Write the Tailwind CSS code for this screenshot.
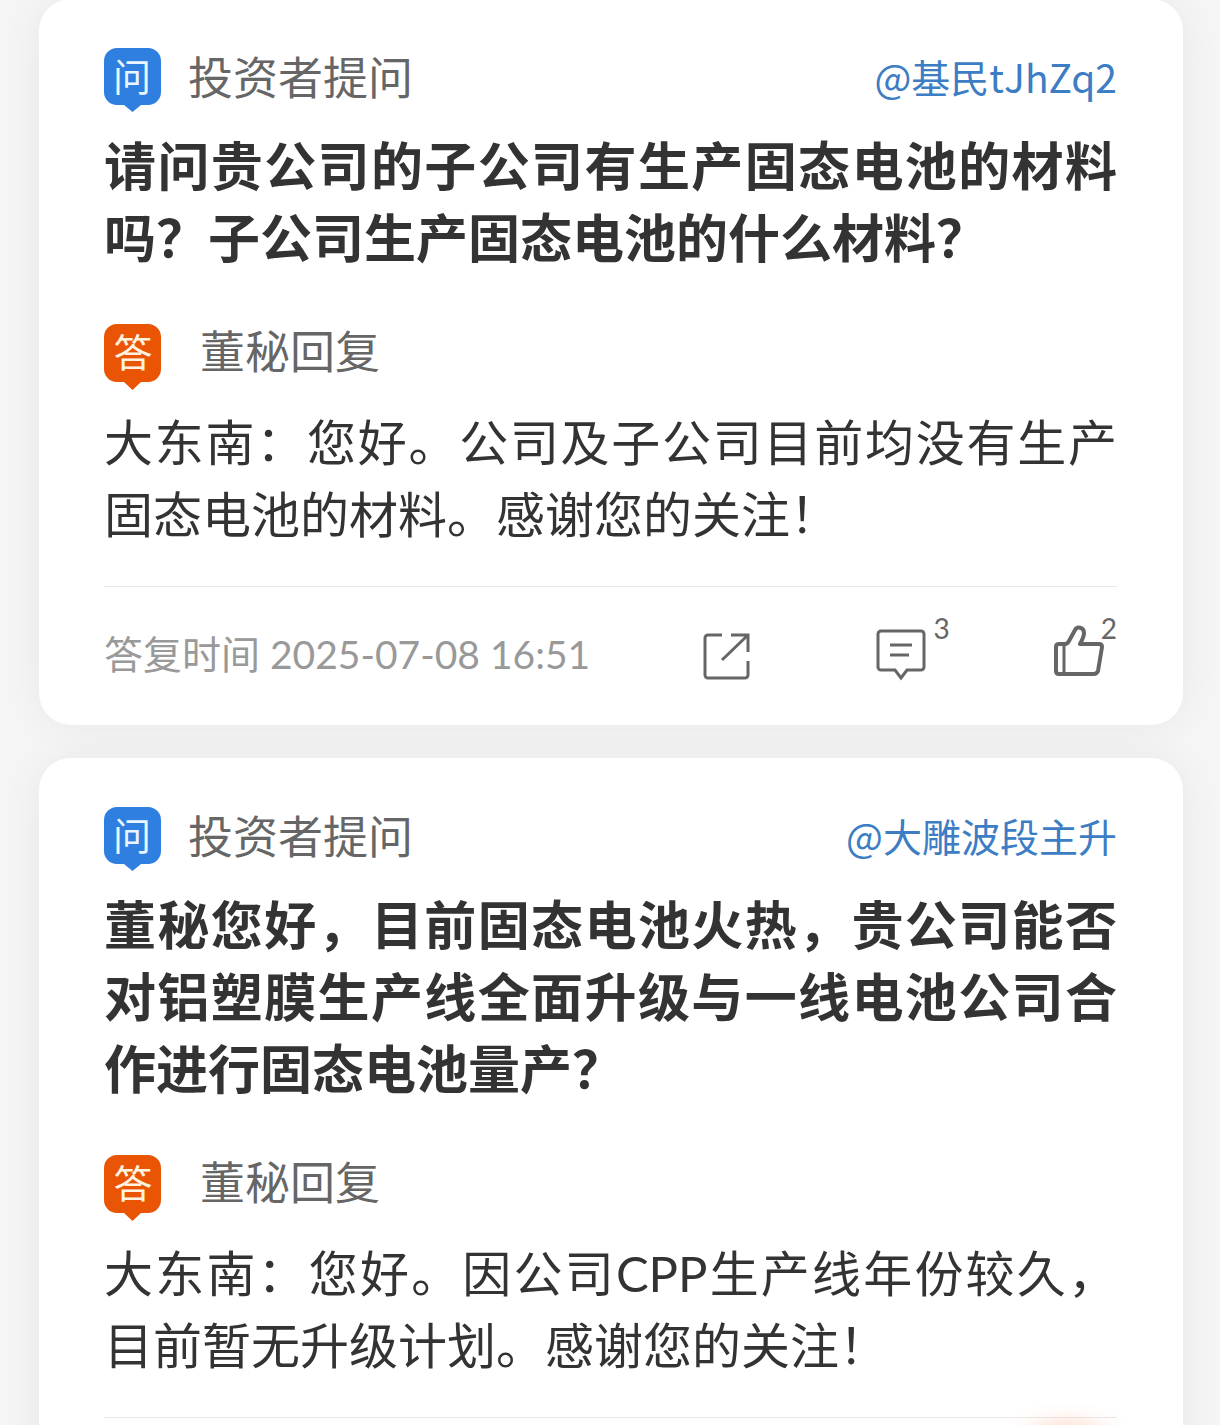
<!DOCTYPE html>
<html lang="zh-CN">
<head>
    <meta charset="UTF-8">
    <meta name="viewport" content="width=device-width, initial-scale=1.0">
    <title>投资者问答</title>
    <script src="https://cdn.jsdelivr.net/npm/@tailwindcss/browser@4"></script>
</head>
<body class="bg-[#f5f5f5] font-['Lato','Noto_Sans_CJK_SC',sans-serif] text-[#333]">
    <main class="h-screen overflow-hidden pr-[37px] pl-[39px]">

        <!-- Tarjeta 1 -->
        <article class="-mt-px mb-[33px] rounded-[32px] bg-white pt-[49px] pr-[66px] pl-[65px] shadow-[0_0_40px_rgba(0,0,0,0.06)]">
            <header class="flex h-16 items-start justify-between">
                <div class="flex items-start gap-[27px]">
                    <svg class="h-16 w-[57px] overflow-visible" viewBox="0 0 57 64" aria-hidden="true">
                        <path fill="#2f7fe0" d="M13 0h31a13 13 0 0 1 13 13v31a13 13 0 0 1-13 13h-7l-8.500 7-8.500-7h-7a13 13 0 0 1-13-13V13a13 13 0 0 1 13-13z"/>
                        <text x="28" y="43" font-size="38" text-anchor="middle" fill="#eaf6ff" font-family="Noto Sans CJK SC">问</text>
                    </svg>
                    <span class="text-[45px] leading-[60px] text-[#666]">投资者提问</span>
                </div>
                <a href="#" class="font-['Noto_Sans_CJK_SC',sans-serif] text-[39px] leading-[56px] text-[#3c7dc4]">@基民tJhZq2</a>
            </header>
            <h2 class="mt-[18px] text-justify text-[52px] leading-[72px] font-bold [text-spacing-trim:space-all]">请问贵公司的子公司有生产固态电池的材料吗？子公司生产固态电池的什么材料？</h2>

            <div class="mt-[50px] flex h-[66px] items-start gap-[39px]">
                <svg class="h-[66px] w-[57px] overflow-visible" viewBox="0 0 57 66" aria-hidden="true">
                    <path fill="#e95504" d="M13 0h31a13 13 0 0 1 13 13v32a13 13 0 0 1-13 13h-7l-8.500 8-8.500-8h-7a13 13 0 0 1-13-13V13a13 13 0 0 1 13-13z"/>
                    <text x="29" y="43" font-size="39" text-anchor="middle" fill="#fff3e0" font-family="Noto Sans CJK SC">答</text>
                </svg>
                <span class="text-[45px] leading-[56px] text-[#666]">董秘回复</span>
            </div>
            <p class="mt-4 text-justify text-[49px] leading-[72px] [text-spacing-trim:space-all]">大东南：您好。公司及子公司目前均没有生产固态电池的材料。感谢您的关注！</p>

            <footer class="mt-9 flex h-[139px] items-center border-t border-[#e8e8e8] text-[#666]">
                <time datetime="2025-07-08T16:51" class="pb-1 text-[39px] leading-[60px] text-[#999]">答复时间 2025-07-08 16:51</time>
                <button type="button" class="ml-auto" aria-label="分享">
                    <svg class="h-[50px] w-[50px]" viewBox="0 0 50 50" fill="none" stroke="currentColor" stroke-width="3">
                        <path d="M20 4H6a3 3 0 0 0-3 3v37a3 3 0 0 0 3 3h37a3 3 0 0 0 3-3V30M29 4h17v17M46 4L20 29"/>
                    </svg>
                </button>
                <button type="button" class="ml-[124px] flex h-[84px] items-start gap-2" aria-label="评论 3">
                    <svg class="mt-[15px] h-[52px] w-[50px]" viewBox="0 0 50 52" fill="none" stroke="currentColor" stroke-width="3">
                        <path d="M5 2h40a3 3 0 0 1 3 3v33a3 3 0 0 1-3 3H31l-6 8-6-8H5a3 3 0 0 1-3-3V5a3 3 0 0 1 3-3zM14 16h22M14 26h19"/>
                    </svg>
                    <span class="text-[28px] leading-none">3</span>
                </button>
                <button type="button" class="ml-[104px] flex h-[84px] items-start" aria-label="点赞 2">
                    <svg class="mt-[11px] -mr-[3px] h-[52px] w-[50px]" viewBox="0 0 50 52" fill="none" stroke="currentColor" stroke-width="4" stroke-linejoin="round">
                        <path d="M5 19h6c2 0 3-1 4-3l6-11c2-4 9-3 9 3 0 4-2 7-4 11h19c2 0 3 1 3 3l-4 24c-1 2-2 3-4 3H5c-2 0-3-1-3-3V22c0-2 1-3 3-3z"/>
                        <path d="M10 19v30" stroke-width="3"/>
                    </svg>
                    <span class="text-[28px] leading-none">2</span>
                </button>
            </footer>
        </article>

        <!-- Tarjeta 2 -->
        <article class="rounded-[32px] bg-white pt-[49px] pr-[66px] pl-[65px] shadow-[0_0_40px_rgba(0,0,0,0.06)]">
            <header class="flex h-16 items-start justify-between">
                <div class="flex items-start gap-[27px]">
                    <svg class="h-16 w-[57px] overflow-visible" viewBox="0 0 57 64" aria-hidden="true">
                        <path fill="#2f7fe0" d="M13 0h31a13 13 0 0 1 13 13v31a13 13 0 0 1-13 13h-7l-8.500 7-8.500-7h-7a13 13 0 0 1-13-13V13a13 13 0 0 1 13-13z"/>
                        <text x="28" y="43" font-size="38" text-anchor="middle" fill="#eaf6ff" font-family="Noto Sans CJK SC">问</text>
                    </svg>
                    <span class="text-[45px] leading-[60px] text-[#666]">投资者提问</span>
                </div>
                <a href="#" class="font-['Noto_Sans_CJK_SC',sans-serif] text-[39px] leading-[56px] text-[#3c7dc4]">@大雕波段主升</a>
            </header>
            <h2 class="mt-[18px] text-justify text-[52px] leading-[72px] font-bold [text-spacing-trim:space-all]">董秘您好，目前固态电池火热，贵公司能否对铝塑膜生产线全面升级与一线电池公司合作进行固态电池量产？</h2>

            <div class="mt-[50px] flex h-[66px] items-start gap-[39px]">
                <svg class="h-[66px] w-[57px] overflow-visible" viewBox="0 0 57 66" aria-hidden="true">
                    <path fill="#e95504" d="M13 0h31a13 13 0 0 1 13 13v32a13 13 0 0 1-13 13h-7l-8.500 8-8.500-8h-7a13 13 0 0 1-13-13V13a13 13 0 0 1 13-13z"/>
                    <text x="29" y="43" font-size="39" text-anchor="middle" fill="#fff3e0" font-family="Noto Sans CJK SC">答</text>
                </svg>
                <span class="text-[45px] leading-[56px] text-[#666]">董秘回复</span>
            </div>
            <p class="mt-4 text-justify text-[49px] leading-[72px] [text-spacing-trim:space-all]">大东南：您好。因公司CPP生产线年份较久，目前暂无升级计划。感谢您的关注！</p>

            <footer class="mt-9 h-[139px] border-t border-[#e8e8e8]"></footer>
        </article>
    </main>

    <!-- Resplandor del botón flotante -->
    <div class="pointer-events-none fixed right-[93px] -bottom-[128px] size-[120px] rounded-full shadow-[0_0_24px_6px_rgba(255,122,69,0.45)]"></div>
</body>
</html>
